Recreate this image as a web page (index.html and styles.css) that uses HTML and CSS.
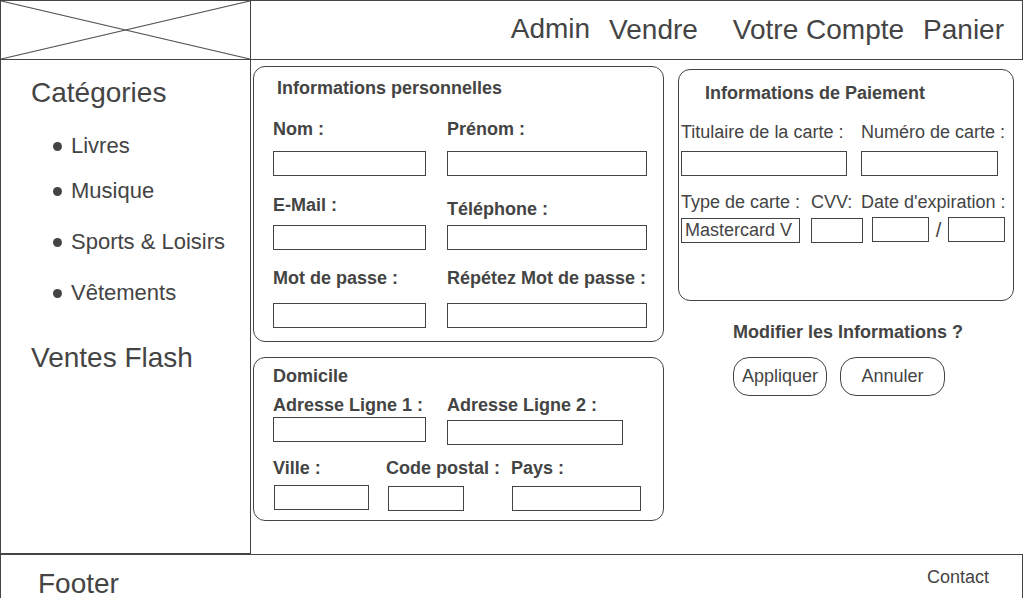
FILE: index.html
```html
<!DOCTYPE html>
<html lang="fr">
<head>
<meta charset="utf-8">
<title>Votre Compte</title>
<link rel="stylesheet" href="styles.css">
</head>
<body>
<div class="page">
  <header class="topbar">
    <div class="logo">
      <svg viewBox="0 0 249 58" preserveAspectRatio="none">
        <line x1="0" y1="0" x2="249" y2="58"/>
        <line x1="0" y1="58" x2="249" y2="0"/>
      </svg>
    </div>
    <nav class="topnav">
      <a href="#" class="nav-admin">Admin</a>
      <a href="#">Vendre</a>
      <a href="#" class="nav-wide">Votre Compte</a>
      <a href="#">Panier</a>
    </nav>
  </header>

  <div class="middle">
    <aside class="sidebar">
      <h2 class="side-title">Catégories</h2>
      <ul class="cat-list">
        <li>Livres</li>
        <li>Musique</li>
        <li>Sports &amp; Loisirs</li>
        <li>Vêtements</li>
      </ul>
      <h2 class="side-title side-title--flash">Ventes Flash</h2>
    </aside>

    <main class="content">
      <div class="col-left">
        <section class="card card-perso">
          <h3 class="card-title card-title--perso">Informations personnelles</h3>
          <div class="form-row">
            <div class="field"><span class="field-label">Nom :</span><input class="input w-153" type="text"></div>
            <div class="field"><span class="field-label">Prénom :</span><input class="input w-200" type="text"></div>
          </div>
          <div class="form-row row-mail">
            <div class="field"><span class="field-label lbl-mail">E-Mail :</span><input class="input w-153" type="text"></div>
            <div class="field"><span class="field-label lbl-tel">Téléphone :</span><input class="input w-200" type="text"></div>
          </div>
          <div class="form-row row-pass">
            <div class="field"><span class="field-label lbl-pass">Mot de passe :</span><input class="input w-153" type="password"></div>
            <div class="field"><span class="field-label lbl-pass">Répétez Mot de passe :</span><input class="input w-200" type="password"></div>
          </div>
        </section>

        <section class="card card-home">
          <h3 class="card-title">Domicile</h3>
          <div class="form-row row-addr">
            <div class="field"><span class="field-label lbl-a1">Adresse Ligne 1 :</span><input class="input w-153" type="text"></div>
            <div class="field"><span class="field-label lbl-a2">Adresse Ligne 2 :</span><input class="input w-176" type="text"></div>
          </div>
          <div class="form-row row-city">
            <div class="field"><span class="field-label lbl-ville">Ville :</span><input class="input w-95 nudge-1" type="text"></div>
            <div class="field"><span class="field-label lbl-cp">Code postal :</span><input class="input w-76 nudge-2" type="text"></div>
            <div class="field"><span class="field-label lbl-cp">Pays :</span><input class="input w-129 nudge-1" type="text"></div>
          </div>
        </section>
      </div>

      <div class="col-right">
        <section class="card card-pay">
          <h3 class="card-title card-title--pay">Informations de Paiement</h3>
          <div class="form-row row-holder">
            <div class="field"><span class="field-label plain lbl-holder">Titulaire de la carte :</span><input class="input w-166" type="text"></div>
            <div class="field"><span class="field-label plain lbl-holder">Numéro de carte :</span><input class="input w-137" type="text"></div>
          </div>
          <div class="form-row row-type">
            <div class="field"><span class="field-label plain lbl-type">Type de carte :</span><span class="select-box w-119">Mastercard V</span></div>
            <div class="field"><span class="field-label plain lbl-type">CVV:</span><input class="input w-52" type="text"></div>
            <div class="field"><span class="field-label plain lbl-date">Date d'expiration :</span>
              <div class="date-row">
                <input class="input w-57 date-first" type="text">
                <span class="slash">/</span>
                <input class="input w-57" type="text">
              </div>
            </div>
          </div>
        </section>
        <p class="confirm">Modifier les Informations ?</p>
        <div class="actions">
          <button class="btn btn-apply" type="button">Appliquer</button>
          <button class="btn btn-cancel" type="button">Annuler</button>
        </div>
      </div>
    </main>
  </div>

  <footer class="footer">
    <span class="footer-title">Footer</span>
    <a href="#" class="footer-link">Contact</a>
  </footer>
</div>
</body>
</html>
```
FILE: styles.css
```css
* { box-sizing: border-box; }
html, body { margin: 0; padding: 0; }
body {
  width: 1024px;
  height: 598px;
  overflow: hidden;
  background: #fff;
  color: #444;
  font-family: "Liberation Sans", Arial, sans-serif;
}

/* Header */
.topbar {
  display: flex;
  width: 1023px;
  height: 60px;
  border: 1px solid #444;
}
.logo {
  width: 250px;
  border-right: 1px solid #444;
}
.logo svg { display: block; width: 249px; height: 58px; }
.logo line { stroke: #555; stroke-width: 1.2; }
.topnav {
  flex: 1;
  display: flex;
  justify-content: flex-end;
  align-items: center;
  gap: 19px;
  padding-right: 18px;
}
.topnav a {
  font-size: 28px;
  line-height: 32px;
  color: #444;
  text-decoration: none;
}
.topnav .nav-admin { margin-bottom: 2px; }
.topnav .nav-wide { margin-left: 16px; }

/* Middle */
.middle { display: flex; height: 494px; }
.sidebar {
  width: 251px;
  border: 1px solid #444;
  border-top: 0;
  padding: 17px 0 0 30px;
}
.side-title {
  margin: 0;
  font-size: 28px;
  line-height: 32px;
  font-weight: normal;
}
.side-title--flash { margin-top: 36px; }
.cat-list {
  list-style: none;
  margin: 24px 0 0;
  padding: 0 0 0 22px;
}
.cat-list li {
  display: flex;
  align-items: center;
  gap: 9px;
  font-size: 22px;
  line-height: 26px;
}
.cat-list li::before {
  content: "";
  width: 9px;
  height: 9px;
  border-radius: 50%;
  background: #444;
}
.cat-list li + li { margin-top: 25px; }
.cat-list li:nth-child(2) { margin-top: 19px; }

.content {
  flex: 1;
  display: flex;
  align-items: flex-start;
  gap: 14px;
  padding: 6px 0 0 2px;
}
.col-left {
  width: 411px;
  display: flex;
  flex-direction: column;
  gap: 15px;
}
.col-right { width: 336px; margin-top: 3px; }

.card {
  border: 1px solid #444;
  border-radius: 12px;
}
.card-title {
  margin: 0;
  font-size: 18px;
  line-height: 22px;
  font-weight: bold;
}
.card-title--perso { padding-left: 4px; }
.card-title--pay { padding-left: 24px; }

.card-perso { padding: 10px 10px 13px 19px; }
.card-home { padding: 7px 10px 9px 19px; }
.card-pay { height: 232px; padding: 12px 6px 0 2px; }

.form-row {
  display: grid;
  grid-template-columns: 174px 1fr;
  margin-top: 18px;
}
.card-title + .form-row { margin-top: 19px; }
.row-pass { margin-top: 17px; }
.card-home .row-addr { margin-top: 7px; }
.row-city { grid-template-columns: 113px 125px 1fr; margin-top: 12px; }
.card-pay .row-holder { grid-template-columns: 180px 1fr; margin-top: 17px; }
.row-type { grid-template-columns: 130px 50px 1fr; margin-top: 15px; }

.field {
  display: flex;
  flex-direction: column;
  align-items: flex-start;
}
.field-label {
  font-size: 18px;
  line-height: 22px;
  font-weight: bold;
  white-space: nowrap;
  margin-bottom: 11px;
}
.field-label.plain { font-weight: normal; }
.lbl-mail { margin-bottom: 9px; }
.lbl-tel { margin-top: 4px; margin-bottom: 5px; }
.lbl-pass { margin-bottom: 14px; }
.lbl-a1 { margin-bottom: 1px; }
.lbl-a2 { margin-bottom: 4px; }
.lbl-ville { margin-bottom: 6px; }
.lbl-cp { margin-bottom: 7px; }
.lbl-holder { margin-bottom: 8px; }
.lbl-type { margin-bottom: 5px; }
.lbl-date { margin-bottom: 4px; }

.input {
  height: 25px;
  margin: 0;
  padding: 0 3px;
  border: 1px solid #444;
  border-radius: 0;
  background: #fff;
  outline: none;
  font: inherit;
}
.nudge-1 { margin-left: 1px; }
.nudge-2 { margin-left: 2px; }

.w-52 { width: 52px; }
.w-57 { width: 57px; }
.w-76 { width: 76px; }
.w-95 { width: 95px; }
.w-119 { width: 119px; }
.w-129 { width: 129px; }
.w-137 { width: 137px; }
.w-153 { width: 153px; }
.w-166 { width: 166px; }
.w-176 { width: 176px; }
.w-200 { width: 200px; }

.select-box {
  display: block;
  height: 25px;
  border: 1px solid #444;
  padding: 0 3px;
  font-size: 18px;
  line-height: 23px;
  white-space: nowrap;
  overflow: hidden;
}
.date-row { display: flex; align-items: center; }
.date-first { margin-left: 11px; }
.slash {
  width: 19px;
  text-align: center;
  font-size: 20px;
  line-height: 24px;
}

.confirm {
  margin: 20px 0 0 55px;
  font-size: 18px;
  line-height: 22px;
  font-weight: bold;
}
.actions {
  display: flex;
  gap: 13px;
  margin-top: 14px;
  padding-left: 55px;
}
.btn {
  height: 39px;
  padding: 0;
  border: 1px solid #444;
  border-radius: 16px;
  background: #fff;
  color: #444;
  font-family: "Liberation Sans", Arial, sans-serif;
  font-size: 18px;
}
.btn-apply { width: 94px; }
.btn-cancel { width: 105px; }

/* Footer */
.footer {
  display: flex;
  justify-content: space-between;
  align-items: flex-start;
  width: 1023px;
  height: 44px;
  border: 1px solid #444;
  border-bottom: 0;
  padding: 0 33px 0 37px;
  overflow: hidden;
}
.footer-title {
  font-size: 28px;
  line-height: 32px;
  margin-top: 13px;
}
.footer-link {
  font-size: 18px;
  line-height: 22px;
  margin-top: 11px;
  color: #444;
  text-decoration: none;
}
```
